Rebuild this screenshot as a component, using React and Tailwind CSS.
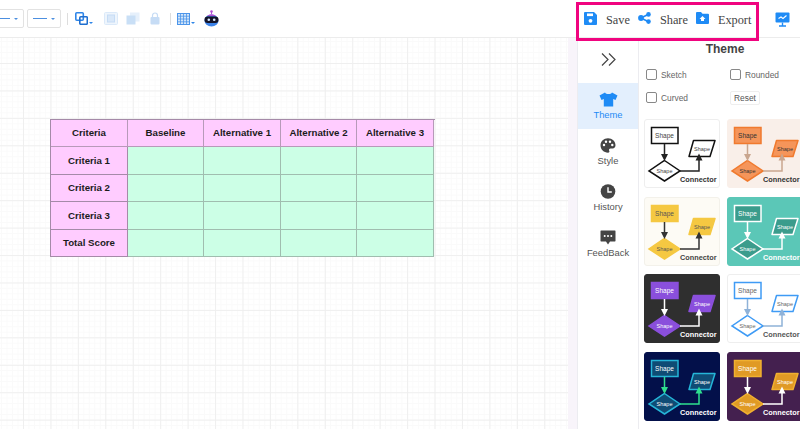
const sans = { fontFamily: '"Liberation Sans", Arial, sans-serif' }

const themes = [
  { bg: '#ffffff', text: '#333333', fill: '#ffffff', stroke: '#111111', line: '#222222', shape: '#444444', border: '#eeeeee' },
  { bg: '#f9efe9', text: '#333333', fill: '#f5955a', stroke: '#f07a2e', line: '#c9a68f', shape: '#333333', border: '#f9efe9' },
  { bg: '#fdfbf5', text: '#444444', fill: '#f5c842', stroke: '#f5c842', line: '#333333', shape: '#555555', border: '#f3f1ea' },
  { bg: '#5bc7b7', text: '#ffffff', fill: '#3b9c8c', stroke: '#ffffff', line: '#ffffff', shape: '#ffffff', border: '#5bc7b7' },
  { bg: '#2f2f2f', text: '#ffffff', fill: '#8a4fdc', stroke: '#8a4fdc', line: '#ffffff', shape: '#ffffff', border: '#2f2f2f' },
  { bg: '#ffffff', text: '#555555', fill: '#ffffff', stroke: '#3f9bf5', line: '#8fb2d8', shape: '#666666', border: '#eeeeee' },
  { bg: '#03104a', text: '#ffffff', fill: '#0f4c75', stroke: '#25b5d8', line: '#2fe08f', shape: '#ffffff', border: '#03104a' },
  { bg: '#44204f', text: '#ffffff', fill: '#e09a25', stroke: '#f0b030', line: '#ffffff', shape: '#ffffff', border: '#44204f' },
]

function ThemeCard({ t }) {
  return (
    <div className="w-[76px] h-[69px] rounded-[3px] border shrink-0" style={{ backgroundColor: t.bg, borderColor: t.border }}>
      <svg width="76" height="69" viewBox="0 0 76 69" className="-m-px" style={sans}>
        <rect x="7.5" y="8.5" width="26.5" height="16" fill={t.fill} stroke={t.stroke} strokeWidth="1.5" />
        <path d="M20.5 41.5 L36 52 L20.5 62 L5 52 Z" fill={t.fill} stroke={t.stroke} strokeWidth="1.5" />
        <path d="M49.5 21.5 L71 21.5 L66 37.5 L45 37.5 Z" fill={t.fill} stroke={t.stroke} strokeWidth="1.5" strokeLinejoin="round" />
        <path d="M20.5 25 V37 M36 52 H55 V41" fill="none" stroke={t.line} strokeWidth="1.5" />
        <path d="M17 35 H24 L20.5 42 Z M51.5 41.5 L55 34.5 L58.5 41.5 Z" fill={t.line} />
        <text x="20.5" y="19" textAnchor="middle" fontSize="6.5" fill={t.shape}>Shape</text>
        <text x="20.5" y="54" textAnchor="middle" fontSize="5.5" fill={t.shape}>Shape</text>
        <text x="58" y="31.5" textAnchor="middle" fontSize="5.5" fill={t.shape}>Shape</text>
        <text x="36" y="62.5" fontSize="7.3" fontWeight="700" fill={t.text}>Connector</text>
      </svg>
    </div>
  )
}

const ShirtIcon = () => (
  <svg width="19" height="15" viewBox="0 0 19 15" fill="currentColor">
    <path d="M6 0.5 L0.5 3.5 L2.5 8 L4.8 7 V14.5 H14.2 V7 L16.5 8 L18.5 3.5 L13 0.5 C12 2.6 7 2.6 6 0.5 Z" />
  </svg>
)
const PaletteIcon = () => (
  <svg width="16" height="15" viewBox="0 0 16 15">
    <path d="M8 0.3 C3.8 0.3 0.5 3.3 0.5 7.3 C0.5 11.4 3.9 14.7 8 14.7 C9.4 14.7 9.8 13.6 9.2 12.7 C8.6 11.7 9.2 10.4 10.6 10.4 H12.6 C14.3 10.4 15.5 9.2 15.5 7.3 C15.5 3.3 12.2 0.3 8 0.3 Z" fill="#444444" />
    <circle cx="4" cy="7" r="1.2" fill="#ffffff" />
    <circle cx="6" cy="3.8" r="1.2" fill="#ffffff" />
    <circle cx="10" cy="3.8" r="1.2" fill="#ffffff" />
    <circle cx="12.3" cy="7" r="1.2" fill="#ffffff" />
  </svg>
)
const ClockIcon = () => (
  <svg width="16" height="15" viewBox="0 0 16 15">
    <circle cx="8" cy="7.5" r="7.3" fill="#444444" />
    <path d="M8 3.2 V8 H11.8" fill="none" stroke="#ffffff" strokeWidth="1.4" />
  </svg>
)
const ChatIcon = () => (
  <svg width="16" height="15" viewBox="0 0 16 15">
    <path d="M1 0.5 H15 A0.8 0.8 0 0 1 15.5 1.2 V11 A0.8 0.8 0 0 1 15 11.5 H10 L8 14.5 L6 11.5 H1 A0.8 0.8 0 0 1 0.5 11 V1.2 A0.8 0.8 0 0 1 1 0.5 Z" fill="#444444" />
    <circle cx="4.7" cy="6" r="1" fill="#ffffff" />
    <circle cx="8" cy="6" r="1" fill="#ffffff" />
    <circle cx="11.3" cy="6" r="1" fill="#ffffff" />
  </svg>
)

function NavItem({ icon, label, active }) {
  return (
    <div className={`h-[46px] pt-[9px] flex flex-col items-center ${active ? 'bg-[#e3effd] text-[#1f8bf5]' : 'text-[#555555]'}`}>
      <div className="h-[15px] flex items-center justify-center">{icon}</div>
      <span className="text-[9.4px] leading-[13px] mt-[1px]">{label}</span>
    </div>
  )
}

function Check({ label }) {
  return (
    <label className="flex items-center gap-[4px] text-[8.4px] text-[#666666]">
      <span className="w-[11px] h-[11px] border border-[#888888] rounded-[2px] bg-white" />
      {label}
    </label>
  )
}

const Caret = ({ color = '#2f86e8' }) => (
  <div className="ml-[1px] mt-[8px] w-0 h-0 border-x-[2px] border-x-transparent border-t-[2px]" style={{ borderTopColor: color }} />
)

const Dash = () => (
  <div className="w-[34px] h-[19px] border border-[#e2e2e2] rounded-[2px] flex items-center justify-center gap-[4px]">
    <div className="w-[14px] h-[1.5px] bg-[#4c8fe0]" />
    <div className="w-0 h-0 border-x-[2px] border-x-transparent border-t-[2px] border-t-[#4c8fe0]" />
  </div>
)

const cols = ['Criteria', 'Baseline', 'Alternative 1', 'Alternative 2', 'Alternative 3']
const rows = ['Criteria 1', 'Criteria 2', 'Criteria 3', 'Total Score']

export default function App() {
  return (
    <div className="w-[800px] h-[429px] overflow-hidden bg-white flex flex-col" style={sans}>
      {/* toolbar */}
      <div className="h-[38px] shrink-0 border-b border-[#ececec] flex items-center relative">
        <div className="flex items-center gap-[3px] -ml-[10px]">
          <Dash />
          <Dash />
        </div>
        <div className="w-px h-[12px] bg-[#dddddd] ml-[6px] mr-[7px]" />
        <svg width="13" height="13" viewBox="0 0 13 13" fill="none">
          <rect x="0.8" y="0.8" width="7.5" height="7.5" rx="1" stroke="#2f86e8" strokeWidth="1.6" />
          <rect x="4.8" y="4.8" width="7.5" height="7.5" rx="1" stroke="#1f6fd0" strokeWidth="1.6" />
        </svg>
        <Caret />
        <svg width="14" height="13" viewBox="0 0 14 13" className="ml-[11px]">
          <rect x="0.5" y="0.5" width="13" height="12" rx="1" fill="#eef5fc" stroke="#dbe9f9" />
          <rect x="3.5" y="3" width="7" height="7" fill="#d9e8f9" stroke="#c6dcf5" />
        </svg>
        <svg width="14" height="13" viewBox="0 0 14 13" className="ml-[8px]">
          <rect x="4" y="0.5" width="9.5" height="9" fill="#e6f0fb" />
          <rect x="0.5" y="3.5" width="9" height="9" fill="#c9dff6" />
        </svg>
        <svg width="10" height="13" viewBox="0 0 10 13" className="ml-[10px]">
          <path d="M2.5 5.5 V3.5 A2.5 2.5 0 0 1 7.5 3.5 V5.5" fill="none" stroke="#c6dcf5" strokeWidth="1.2" />
          <rect x="0.5" y="5" width="9" height="7.5" rx="1" fill="#c6dcf5" />
        </svg>
        <div className="w-px h-[12px] bg-[#dddddd] ml-[10px] mr-[6px]" />
        <svg width="13" height="12" viewBox="0 0 13 12">
          <rect x="0.5" y="0.5" width="12" height="11" fill="#d3e6fa" stroke="#4c95ea" />
          <path d="M3.5 0 V12 M6.5 0 V12 M9.5 0 V12 M0 3.2 H13 M0 6 H13 M0 8.8 H13" stroke="#4c95ea" strokeWidth="0.8" />
        </svg>
        <Caret />
        <svg width="17" height="17" viewBox="0 0 17 17" className="ml-[8px]">
          <circle cx="8.5" cy="1.5" r="1.3" fill="#b14fd6" />
          <path d="M8.5 1.5 V4" stroke="#b14fd6" />
          <ellipse cx="8.5" cy="10.5" rx="7" ry="6" fill="#3b82e8" />
          <path d="M4 6 A6 5 0 0 1 13 6 Z" fill="#b14fd6" />
          <rect x="1.5" y="6.5" width="14" height="6.5" rx="3.2" fill="#14142a" />
          <circle cx="5.8" cy="9.7" r="1.3" fill="#d8ecff" />
          <circle cx="11.2" cy="9.7" r="1.3" fill="#d8ecff" />
        </svg>

        <div className="absolute left-[576px] top-[2px] w-[183px] h-[39px] border-[3px] border-[#f0047f] z-10 flex items-center" style={{ fontFamily: '"Liberation Serif", serif' }}>
          <svg width="13" height="13" viewBox="0 0 13 13" className="ml-[5px] -mt-[7px]">
            <path d="M1 0 H10 L13 3 V12 A1 1 0 0 1 12 13 H1 A1 1 0 0 1 0 12 V1 A1 1 0 0 1 1 0 Z" fill="#1f8bf5" />
            <rect x="3" y="1.5" width="6" height="2.6" fill="#ffffff" />
            <circle cx="6.5" cy="8.8" r="1.9" fill="#ffffff" />
          </svg>
          <span className="text-[12.3px] text-[#444444] ml-[9px] -mt-[3px]">Save</span>
          <svg width="13" height="12" viewBox="0 0 13 12" className="ml-[8px] -mt-[7px]">
            <path d="M3 6 L10.5 2.3 M3 6 L10.5 9.7" stroke="#1f8bf5" strokeWidth="1.6" />
            <circle cx="3" cy="6" r="2.9" fill="#1f8bf5" />
            <circle cx="10.5" cy="2.4" r="2.3" fill="#1f8bf5" />
            <circle cx="10.5" cy="9.6" r="2.3" fill="#1f8bf5" />
          </svg>
          <span className="text-[12.3px] text-[#444444] ml-[9px] -mt-[3px]">Share</span>
          <svg width="13" height="12" viewBox="0 0 13 12" className="ml-[8px] -mt-[7px]">
            <path d="M0 1 A1 1 0 0 1 1 0 H5 L6.5 1.8 H12 A1 1 0 0 1 13 2.8 V11 A1 1 0 0 1 12 12 H1 A1 1 0 0 1 0 11 Z" fill="#1f8bf5" />
            <path d="M6.5 4 L9.5 7 H8 V9 H5 V7 H3.5 Z" fill="#ffffff" />
          </svg>
          <span className="text-[12.3px] text-[#444444] ml-[9px] -mt-[3px]">Export</span>
        </div>
        <svg width="15" height="15" viewBox="0 0 15 15" className="absolute left-[775px] top-[12px]">
          <rect x="0.5" y="0.5" width="14" height="10" rx="1" fill="#1f8bf5" />
          <path d="M3.5 6.5 L6 5 L8 6.5 L11.5 3.5" fill="none" stroke="#ffffff" strokeWidth="1.1" />
          <path d="M7.5 10.5 V13.5 M4 14 H11" stroke="#1f8bf5" strokeWidth="1.4" />
        </svg>
      </div>

      <div className="flex-1 flex min-h-0">
        {/* canvas */}
        <div className="w-[577px] shrink-0 flex">
          <div className="w-[568px] shrink-0 bg-white bg-[linear-gradient(#efefef_1px,transparent_1px),linear-gradient(90deg,#efefef_1px,transparent_1px),linear-gradient(#fafafa_1px,transparent_1px),linear-gradient(90deg,#fafafa_1px,transparent_1px)] bg-[size:27.45px_27.45px,27.45px_27.45px,5.49px_5.49px,5.49px_5.49px] bg-[position:23px_25px,23px_25px,23px_25px,23px_25px] pt-[81px] pl-[50px]">
            <div className="w-[385px] border-l border-t border-[#a58aa8] grid grid-cols-[77px_76px_77px_76px_77px] grid-rows-[27.4px_27.4px_27.4px_27.4px_27.4px] text-[9.7px] font-bold text-[#1c1c1c]">
              {cols.map(c => (
                <div key={c} className="bg-[#ffccff] border-r border-b border-[#b79ab9] flex items-center justify-center pt-px">{c}</div>
              ))}
              {rows.map(r => (
                <div key={r} className="contents">
                  <div className="bg-[#ffccff] border-r border-b border-[#a58aa8] flex items-center justify-center pt-px">{r}</div>
                  {[1, 2, 3, 4].map(i => (
                    <div key={i} className="bg-[#ccffe6] border-r border-b border-[#a0bdaf]" />
                  ))}
                </div>
              ))}
            </div>
          </div>
          <div className="flex-1 bg-[#f8f4fa]" />
        </div>

        {/* left rail of the panel */}
        <div className="w-[62px] shrink-0 border-x border-[#ececf0] bg-white">
          <div className="h-[45px] flex items-center justify-center">
            <svg width="15" height="13" viewBox="0 0 15 13" fill="none" stroke="#444444" strokeWidth="1.2" className="-mt-[2px]">
              <path d="M1 0.5 L7 6.5 L1 12.5 M8 0.5 L14 6.5 L8 12.5" />
            </svg>
          </div>
          <NavItem icon={<ShirtIcon />} label="Theme" active />
          <NavItem icon={<PaletteIcon />} label="Style" />
          <NavItem icon={<ClockIcon />} label="History" />
          <NavItem icon={<ChatIcon />} label="FeedBack" />
        </div>

        {/* theme panel */}
        <div className="flex-1 min-w-0 overflow-hidden pl-[5px]">
          <div className="text-[12px] font-bold text-[#444444] text-center pl-[6px] pt-[3px] leading-[16px]">Theme</div>
          <div className="grid grid-cols-[84px_60px] grid-rows-[14px_14px] mt-[11px] pl-[2px] gap-y-[9px] items-center">
            <Check label="Sketch" />
            <Check label="Rounded" />
            <Check label="Curved" />
            <div className="w-[30px] h-[14px] border border-[#eeeeee] rounded-[2px] text-[8.4px] text-[#555555] flex items-center justify-center">Reset</div>
          </div>
          <div className="grid grid-cols-[76px_76px] gap-x-[7px] gap-y-[8.67px] mt-[14px] w-[159px]">
            {themes.map((t, i) => <ThemeCard key={i} t={t} />)}
          </div>
        </div>
      </div>
    </div>
  )
}
